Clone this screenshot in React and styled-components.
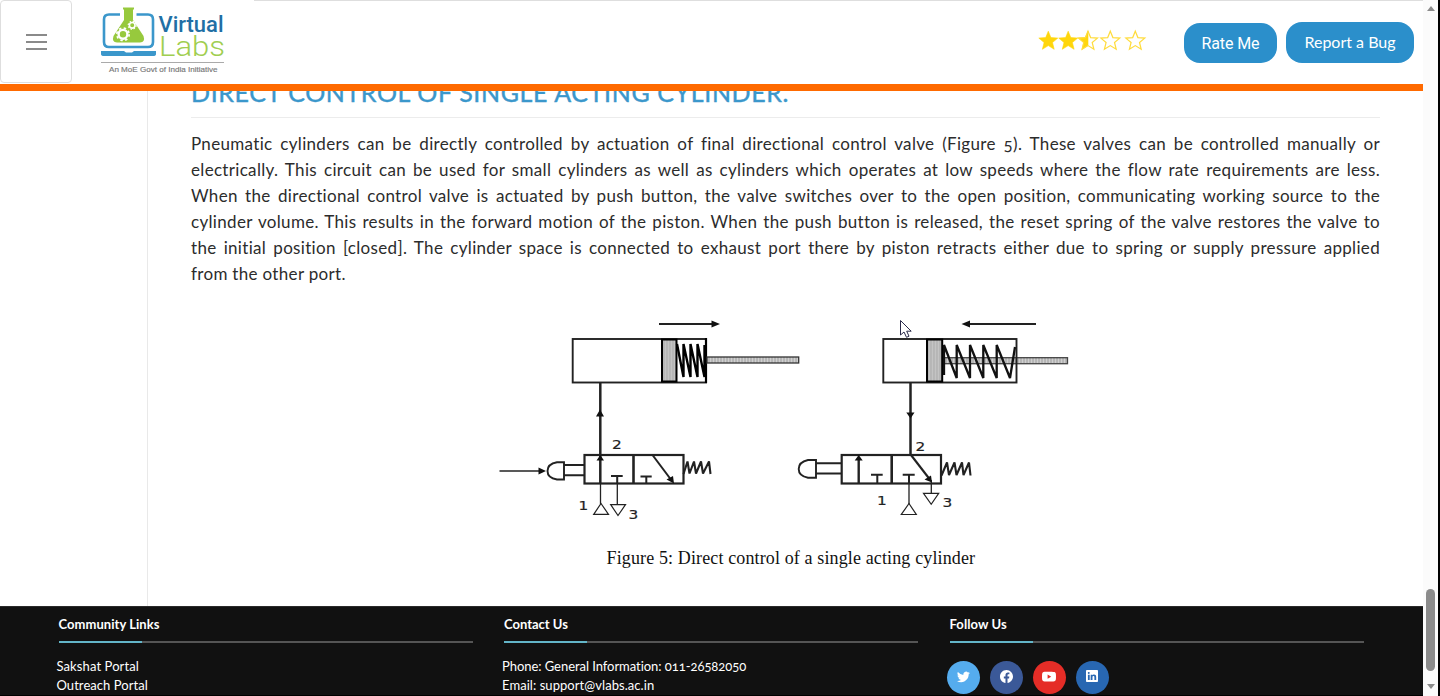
import React from "react";
import styled, { createGlobalStyle } from "styled-components";
import { BsTwitter, BsFacebook, BsYoutube, BsLinkedin } from "react-icons/bs";

const GlobalStyle = createGlobalStyle`
  * { box-sizing: border-box; }
  body { margin: 0; background: #fff; overflow: hidden; font-family: Lato, "Open Sans", sans-serif; }
`;

const Screen = styled.div`
  display: grid;
  grid-template-columns: 1423px 15px 2px;
  height: 696px;
  overflow: hidden;
  background: #000;
`;

const Page = styled.div`
  display: flex;
  flex-direction: column;
  height: 696px;
  background: #fff;
  overflow: hidden;
`;

const Header = styled.header`
  display: flex;
  flex: none;
  height: 91px;
  background: #fff;
  border-bottom: 7px solid #ff6a00;
`;

const MenuButton = styled.button`
  display: flex;
  flex-direction: column;
  align-items: center;
  justify-content: center;
  gap: 5px;
  width: 72px;
  height: 83px;
  padding: 0;
  background: #fff;
  border: 1px solid #dedede;
  border-radius: 4px;
`;

const MenuBar = styled.span`
  width: 21px;
  height: 2px;
  background: #8a8a8a;
`;

const Logo = styled.svg`
  flex: none;
  margin-left: 28px;
`;

const Actions = styled.div`
  display: flex;
  flex: 1;
  justify-content: flex-end;
  margin-left: 24px;
  padding: 21px 9px 0 0;
  border-top: 1px solid #dedede;
`;

const Stars = styled.svg`
  flex: none;
  margin: 7px 36px 0 0;
`;

const PillButton = styled.button`
  width: ${(p) => p.$width}px;
  height: ${(p) => p.$height}px;
  margin: ${(p) => 41 - p.$height}px 0 0 ${(p) => p.$gap || 0}px;
  padding: 0 0 ${(p) => p.$lift || 0}px;
  border: 0;
  border-radius: 16px;
  background: #2b8fcb;
  color: #fff;
  font: ${(p) => p.$font};
  letter-spacing: ${(p) => p.$spacing || 0}px;
  white-space: nowrap;
`;

const Body = styled.div`
  display: flex;
  height: 515px;
  flex: none;
`;

const Sidebar = styled.aside`
  width: 148px;
  flex: none;
  border-right: 1px solid #e9e9e9;
`;

const Article = styled.main`
  width: 1232px;
  padding-left: 43px;
`;

const TitleBox = styled.div`
  display: flex;
  align-items: flex-end;
  height: 27px;
  overflow: hidden;
  border-bottom: 1px solid #ececec;
`;

const Title = styled.h2`
  margin: 0 0 10px;
  font-size: 25px;
  line-height: 30px;
  font-weight: 400;
  letter-spacing: 0.62px;
  -webkit-text-stroke: 0.4px #3b97cb;
  color: #3b97cb;
  white-space: nowrap;
`;

const Paragraph = styled.p`
  margin: 13px 0 0;
  font-size: 17px;
  line-height: 26px;
  color: #2c2c2c;
  font-variant-numeric: oldstyle-nums;
`;

const Line = styled.span`
  display: block;
  white-space: nowrap;
  text-align-last: ${(p) => (p.$last ? "left" : "justify")};
  letter-spacing: 0.32px;
`;

const Figure = styled.figure`
  display: flex;
  flex-direction: column;
  align-items: flex-start;
  margin: 23px 0 0 299px;
`;

const Caption = styled.figcaption`
  margin: 15px 0 0 116.5px;
  font: 18px/26px "Liberation Serif", serif;
  letter-spacing: 0.13px;
  color: #111;
  white-space: nowrap;
`;

const Footer = styled.footer`
  display: flex;
  flex: 1;
  gap: 30.5px;
  padding: 9px 0 0 56.5px;
  background: #111;
  border-top: 1px solid #2a2a2a;
  border-bottom: 1px solid #000;
  color: #fff;
`;

const FooterColumn = styled.section`
  flex: none;
  width: 415px;
`;

const FooterTitle = styled.h3`
  margin: 0 0 0 2px;
  height: 25px;
  font-size: 13px;
  line-height: 17px;
  font-weight: 700;
  letter-spacing: ${(p) => p.$spacing}px;
`;

const Rule = styled.div`
  width: 414px;
  height: 2px;
  margin-left: 2px;
  background: linear-gradient(to right, #63b5c8 83px, #555 83px);
`;

const FooterText = styled.div`
  font-size: 13px;
  line-height: 19px;
  letter-spacing: ${(p) => p.$spacing}px;
  font-variant-numeric: oldstyle-nums;
  white-space: nowrap;
`;

const FooterList = styled.div`
  padding-top: 14px;
`;

const SocialRow = styled.div`
  display: flex;
  gap: 10px;
  margin-left: -1px;
  padding-top: 18px;
`;

const SocialIcon = styled.a`
  display: flex;
  justify-content: center;
  width: 33px;
  height: 33px;
  padding-top: 8.5px;
  border-radius: 50%;
  background: ${(p) => p.$color};
  color: #fff;
  font-size: ${(p) => p.$size || 13}px;
`;

const Scrollbar = styled.div`
  display: flex;
  flex-direction: column;
  align-items: center;
  padding: 6px 3px 5px;
  height: 696px;
  background: #fbfbfb;
`;

const Thumb = styled.div`
  width: 9px;
  height: 82px;
  margin-top: auto;
  margin-bottom: 13px;
  border-radius: 5px;
  background: #8b8b8b;
`;

const Arrow = styled.div`
  width: 0;
  height: 0;
  border: 4.5px solid transparent;
  border-width: ${(p) => (p.$up ? "0 4.5px 5px" : "5px 4.5px 0")};
  border-${(p) => (p.$up ? "bottom" : "top")}-color: #8b8b8b;
  margin-bottom: ${(p) => (p.$up ? 0 : 2)}px;
`;

const Cursor = styled.svg`
  position: absolute;
  left: 899px;
  top: 319px;
`;

const STAR = "M10 0.8 L12.6 7.2 L19.5 7.7 L14.2 12.1 L15.9 18.9 L10 15.2 L4.1 18.9 L5.8 12.1 L0.5 7.7 L7.4 7.2 Z";

function Rating() {
  return (
    <Stars width="110" height="22" viewBox="0 0 110 22">
      <g fill="#ffd60c" stroke="#ffd60c" strokeWidth="0.6">
        <path d={STAR} transform="translate(0.3 1.4)" />
        <path d={STAR} transform="translate(20.2 1.4)" />
        <path d="M10 0.8 L10 15.2 L4.1 18.9 L5.8 12.1 L0.5 7.7 L7.4 7.2 Z" transform="translate(40 1.4)" />
      </g>
      <g fill="none" stroke="#ffdc3c" strokeWidth="1.2">
        <path d={STAR} transform="translate(40 1.4)" />
        <path d={STAR} transform="translate(62.3 1.4)" />
        <path d={STAR} transform="translate(87.3 1.4)" />
      </g>
    </Stars>
  );
}

function Gear({ x, y, r, w }) {
  return (
    <g fill="none" stroke="#fff">
      <circle cx={x} cy={y} r={r} strokeWidth={w} />
      <circle cx={x} cy={y} r={r + w * 0.75} strokeWidth={w * 0.7} strokeDasharray={`${((r + w * 0.75) * Math.PI) / 8}`} />
    </g>
  );
}

function VirtualLabsLogo() {
  return (
    <Logo width="130" height="84" viewBox="100 0 130 84">
      <path d="M120 14.500H109Q104 14.500 104 19.500V42Q104 47 109 47H148Q153 47 153 42V19.500Q153 14.500 148 14.500H136.500" fill="none" stroke="#3b97cb" strokeWidth="2.600" />
      <path d="M101 51H124L126 52.500H132L134 51H156V54Q156 56 153 56H104Q101 56 101 54Z" fill="#3b97cb" />
      <path d="M123 7.500H134V9.500H133V20L143.500 36Q145.500 42 140 42.500H117Q111.500 42 113.500 36L124 20V9.500H123Z" fill="#97c93d" />
      <Gear x={123} y={34.3} r={4.4} w={2.4} />
      <Gear x={132.2} y={25.3} r={2.8} w={1.6} />
      <g fontFamily="Roboto, sans-serif">
        <text x="158.500" y="31.500" fontSize="22.500" fontWeight="500" fill="#216fa5" textLength="65" lengthAdjust="spacingAndGlyphs">Virtual</text>
        <text x="159" y="56" fontSize="28" fontWeight="300" fill="#a0ce50" textLength="66" lengthAdjust="spacingAndGlyphs">Labs</text>
      </g>
      <path d="M101 62.500H224" stroke="#aaa" strokeWidth="1.200" />
      <text x="109" y="72.300" fontFamily="Liberation Sans, sans-serif" fontSize="7.800" fill="#777" stroke="#777" strokeWidth="0.150" textLength="108.500" lengthAdjust="spacingAndGlyphs">An MoE Govt of India Initiative</text>
    </Logo>
  );
}

function Digit({ x, y, children }) {
  return (
    <text transform={`translate(${x} ${y}) scale(1.18 1)`} fontFamily="DejaVu Sans, sans-serif" fontSize="13" fill="#222" stroke="#222" strokeWidth="0.2">
      {children}
    </text>
  );
}

function Diagram() {
  return (
    <svg width="590" height="220" viewBox="490 310 590 220">
      <defs>
        <pattern id="piston" width="3" height="3" patternUnits="userSpaceOnUse">
          <rect width="3" height="3" fill="#c4c4c4" />
          <path d="M1 0V3" stroke="#a2a2a2" strokeWidth="0.8" />
        </pattern>
        <pattern id="rod" width="3" height="8" patternUnits="userSpaceOnUse">
          <rect width="3" height="8" fill="#cfcfcf" />
          <path d="M1 0V8" stroke="#8e8e8e" strokeWidth="0.8" />
        </pattern>
      </defs>

      <g fill="none" stroke="#222" strokeWidth="1.9">
        <path d="M659 324H713" />
        <rect x="572.700" y="339" width="133.300" height="43.500" />
        <rect x="662" y="339.500" width="14.500" height="42" fill="url(#piston)" stroke="#000" strokeWidth="2" />
        <path d="M677 344L683.500 377V344L690.500 377V344L697.500 377V344L704.500 377V345" stroke="#000" strokeWidth="2.400" strokeLinejoin="bevel" />
        <path d="M706 338V383" stroke="#000" strokeWidth="2.200" />
        <rect x="707" y="357" width="91.700" height="6" fill="url(#rod)" stroke="#333" strokeWidth="1.300" />
        <path d="M600.300 383V484" strokeWidth="2.500" />
        <path d="M600.500 484V504M617.300 484V504" strokeWidth="1.300" />
        <path d="M499.500 471H540" strokeWidth="1.700" />
        <path d="M564 462.300H557Q547.500 464 547.500 471Q547.500 478 557 479.500H564Z" />
        <path d="M564 465H584M564 475.200H584" />
        <rect x="584.500" y="455" width="99" height="28.500" strokeWidth="2.200" />
        <path d="M633.500 455V483.500" strokeWidth="2.600" />
        <path d="M611 476H622.700M617.200 476V484M640.500 476.500H651.700M646.300 476.500V483.500" strokeWidth="2" />
        <path d="M652.500 455L670.500 479" strokeWidth="2" />
        <path d="M683.500 474L687.500 461.500L689.500 473.500L694 461.500L696 473.500L701 461.500L703 473.500L709 461.500L710.500 474" strokeWidth="2.100" strokeLinejoin="bevel" />
        <path d="M601 503.500L608.500 514.300H593.700ZM610.700 504.700H625.500L618 515.500Z" strokeWidth="1.200" />
      </g>
      <g fill="#111">
        <path d="M711.500 320.500L720 324L711.500 327.500ZM596 416.500L600 409.500L604 416.500ZM596.500 460.500L600.300 455L604 460.500ZM538.500 467.500L546 471L538.500 474.500ZM674 483.500L666.500 479.500L673 476Z" />
      </g>
      <Digit x={612} y={449}>2</Digit>
      <Digit x={578.5} y={510}>1</Digit>
      <Digit x={628.5} y={518.5}>3</Digit>

      <g fill="none" stroke="#222" strokeWidth="1.900">
        <path d="M969 324H1036" />
        <rect x="942" y="357.700" width="125.500" height="6" fill="url(#rod)" stroke="#444" strokeWidth="1.300" />
        <rect x="883.300" y="339" width="133.200" height="43.500" />
        <rect x="927" y="339.500" width="15.200" height="42" fill="url(#piston)" stroke="#000" strokeWidth="2" />
        <path d="M944 375V345L956.700 378V345L970 378V345L983.300 378V345L996.700 378V345L1010 378L1015 347" stroke="#111" strokeWidth="2.300" strokeLinejoin="bevel" />
        <path d="M910.500 383V455" strokeWidth="2.500" />
        <path d="M816 460H808Q798.700 462 798.700 469Q798.700 476 808 477.700H816Z" />
        <path d="M816 463.200H841M816 473.500H841" />
        <rect x="841.700" y="455" width="99.300" height="28.500" strokeWidth="2.200" />
        <path d="M891.700 455V483.500" strokeWidth="2.600" />
        <path d="M858.700 460V483.500" strokeWidth="2.400" />
        <path d="M871 474.700H882.700M877.300 474.700V483.500M902.700 474.700H914.700M909 474.700V484" strokeWidth="2" />
        <path d="M909 484V504M931.300 480V493" strokeWidth="1.300" />
        <path d="M911 455L929.500 479" strokeWidth="2.100" />
        <path d="M941.500 475.500L947 462.500L949 475L954.500 462.500L956.500 475L962 462.500L963.500 475L969 462.500L970.500 475.500" strokeWidth="2.100" strokeLinejoin="bevel" />
        <path d="M909 503.500L916.300 514.500H901.300ZM923.500 493.300H938.700L931.200 504.300Z" strokeWidth="1.200" />
      </g>
      <g fill="#111">
        <path d="M961.500 324L970 320.500V327.500ZM906.300 412.500H914.500L910.500 418.500ZM854.700 460.500L858.700 455L862.700 460.500ZM932 482.500L924.500 479.500L931 475.500Z" />
      </g>
      <Digit x={915.5} y={450.5}>2</Digit>
      <Digit x={877} y={504.5}>1</Digit>
      <Digit x={942.5} y={507}>3</Digit>
    </svg>
  );
}

const LINES = [
  "Pneumatic cylinders can be directly controlled by actuation of final directional control valve (Figure 5). These valves can be controlled manually or",
  "electrically. This circuit can be used for small cylinders as well as cylinders which operates at low speeds where the flow rate requirements are less.",
  "When the directional control valve is actuated by push button, the valve switches over to the open position, communicating working source to the",
  "cylinder volume. This results in the forward motion of the piston. When the push button is released, the reset spring of the valve restores the valve to",
  "the initial position [closed]. The cylinder space is connected to exhaust port there by piston retracts either due to spring or supply pressure applied",
  "from the other port.",
];

export default function App() {
  return (
    <Screen>
      <GlobalStyle />
      <Page>
        <Header>
          <MenuButton aria-label="Menu">
            <MenuBar />
            <MenuBar />
            <MenuBar />
          </MenuButton>
          <VirtualLabsLogo />
          <Actions>
            <Rating />
            <PillButton $width={93} $height={40} $font="400 16px Roboto, sans-serif" $spacing={-0.1}>Rate Me</PillButton>
            <PillButton $width={128} $height={41} $gap={9} $lift={3} $font="400 16px Lato, sans-serif">Report a Bug</PillButton>
          </Actions>
        </Header>
        <Body>
          <Sidebar />
          <Article>
            <TitleBox>
              <Title>DIRECT CONTROL OF SINGLE ACTING CYLINDER.</Title>
            </TitleBox>
            <Paragraph>
              {LINES.map((text, i) => (
                <Line key={i} $last={i === LINES.length - 1}>{text}</Line>
              ))}
            </Paragraph>
            <Figure>
              <Diagram />
              <Caption>Figure 5: Direct control of a single acting cylinder</Caption>
            </Figure>
          </Article>
        </Body>
        <Footer>
          <FooterColumn>
            <FooterTitle $spacing={0.05}>Community Links</FooterTitle>
            <Rule />
            <FooterList>
              <FooterText $spacing={0.1}>Sakshat Portal</FooterText>
              <FooterText $spacing={0.05}>Outreach Portal</FooterText>
            </FooterList>
          </FooterColumn>
          <FooterColumn>
            <FooterTitle $spacing={0}>Contact Us</FooterTitle>
            <Rule />
            <FooterList>
              <FooterText $spacing={-0.05}>Phone: General Information: 011-26582050</FooterText>
              <FooterText $spacing={0.06}>Email: support@vlabs.ac.in</FooterText>
            </FooterList>
          </FooterColumn>
          <FooterColumn>
            <FooterTitle $spacing={0.1}>Follow Us</FooterTitle>
            <Rule />
            <SocialRow>
              <SocialIcon $color="#55acee"><BsTwitter /></SocialIcon>
              <SocialIcon $color="#3b5998"><BsFacebook /></SocialIcon>
              <SocialIcon $color="#e52d27" $size={14}><BsYoutube /></SocialIcon>
              <SocialIcon $color="#2867b2" $size={12}><BsLinkedin /></SocialIcon>
            </SocialRow>
          </FooterColumn>
        </Footer>
      </Page>
      <Scrollbar>
        <Arrow $up />
        <Thumb />
        <Arrow />
      </Scrollbar>
      <Cursor width="14" height="20" viewBox="0 0 14 20">
        <path d="M1.500 1.500V16L5 13L7.500 18.300L10 17.200L7.700 12.200H12.200Z" fill="#fff" stroke="#2a2a4a" strokeWidth="1" />
      </Cursor>
    </Screen>
  );
}
